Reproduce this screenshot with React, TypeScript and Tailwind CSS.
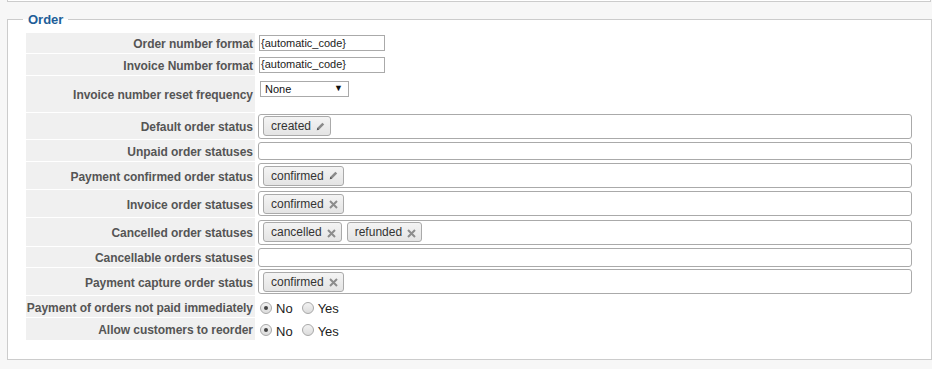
import React from "react";

type Tag = { label: string; icon: "edit" | "remove" };

type Row = {
  label: string;
  h: string;
  kind: "text" | "select" | "tags" | "radio";
  value?: string;
  tags?: Tag[];
  boxH?: string;
};

const rows: Row[] = [
  { label: "Order number format", h: "h-[20px]", kind: "text", value: "{automatic_code}" },
  { label: "Invoice Number format", h: "h-[21px]", kind: "text", value: "{automatic_code}" },
  { label: "Invoice number reset frequency", h: "h-[36px]", kind: "select", value: "None" },
  { label: "Default order status", h: "h-[26px]", kind: "tags", tags: [{ label: "created", icon: "edit" }] },
  { label: "Unpaid order statuses", h: "h-[21px]", kind: "tags", tags: [], boxH: "h-[18px]" },
  { label: "Payment confirmed order status", h: "h-[27px]", kind: "tags", tags: [{ label: "confirmed", icon: "edit" }] },
  { label: "Invoice order statuses", h: "h-[27px]", kind: "tags", tags: [{ label: "confirmed", icon: "remove" }] },
  {
    label: "Cancelled order statuses",
    h: "h-[28px]",
    kind: "tags",
    tags: [
      { label: "cancelled", icon: "remove" },
      { label: "refunded", icon: "remove" },
    ],
  },
  { label: "Cancellable orders statuses", h: "h-[20px]", kind: "tags", tags: [], boxH: "h-[19px]" },
  { label: "Payment capture order status", h: "h-[27px]", kind: "tags", tags: [{ label: "confirmed", icon: "remove" }] },
  { label: "Payment of orders not paid immediately", h: "h-[21px]", kind: "radio" },
  { label: "Allow customers to reorder", h: "h-[22px]", kind: "radio" },
];

function PencilIcon() {
  return (
    <svg width="9" height="9" viewBox="0 0 9 9" className="ml-[5px]">
      <path d="M0.8 8.2 L1.4 5.8 L6.4 0.8 L8.2 2.6 L3.2 7.6 Z" fill="#8a8a8a" />
      <path d="M0.8 8.2 L1.4 5.8 L3.2 7.6 Z" fill="#555" />
    </svg>
  );
}

function RemoveIcon() {
  return (
    <svg width="9" height="9" viewBox="0 0 9 9" className="ml-[5px] mt-[2px]">
      <path d="M1 1 L8 8 M8 1 L1 8" stroke="#8c8c8c" strokeWidth="2" />
    </svg>
  );
}

function TagChip({ tag }: { tag: Tag }) {
  return (
    <span className="flex h-[20px] items-center rounded-[3px] border border-[#aaa] bg-gradient-to-b from-[#f4f4f4] to-[#e4e4e4] pl-[7px] pr-[5px] text-[12px] text-[#333]">
      {tag.label}
      {tag.icon === "edit" ? <PencilIcon /> : <RemoveIcon />}
    </span>
  );
}

function Radio({ checked, label }: { checked: boolean; label: string }) {
  return (
    <span className="flex items-center">
      <span className="flex h-[12px] w-[12px] items-center justify-center rounded-full border border-[#a8a8a8] bg-gradient-to-b from-[#f2f2f2] to-[#dcdcdc]">
        {checked && <span className="h-[4px] w-[4px] rounded-full bg-[#444]" />}
      </span>
      <span className="ml-[4px] mt-[3px] text-[13px] text-[#222]">{label}</span>
    </span>
  );
}

function Value({ row }: { row: Row }) {
  if (row.kind === "text") {
    return (
      <div className="ml-[2px] flex h-[16px] w-[126px] items-center border border-[#aaa] bg-white pl-[1px] text-[11px] text-[#222]">
        {row.value}
      </div>
    );
  }
  if (row.kind === "select") {
    return (
      <div className="ml-[3px] mt-[5px] flex h-[16px] w-[89px] items-center justify-between border border-[#aaa] bg-white pl-[4px] pr-[5px] text-[11px] text-[#111]">
        <span>{row.value}</span>
        <span className="text-[9px]">▼</span>
      </div>
    );
  }
  if (row.kind === "tags") {
    return (
      <div
        className={`ml-[1px] flex ${row.boxH ?? "h-[25px]"} w-[654px] items-center gap-[5px] rounded-[3px] border border-[#aaa] bg-white pl-[4px]`}
      >
        {row.tags?.map((t) => (
          <TagChip key={t.label} tag={t} />
        ))}
      </div>
    );
  }
  return (
    <div className="ml-[3px] mt-[2px] flex items-center gap-[9px]">
      <Radio checked label="No" />
      <Radio checked={false} label="Yes" />
    </div>
  );
}

export default function App() {
  return (
    <div className="h-[369px] w-[932px] overflow-hidden bg-[#f7f7f7] font-['Liberation_Sans',Arial,sans-serif]">
      <div className="ml-[7px] h-[2px] w-[924px] border-x border-b border-[#ccc] bg-white" />

      <fieldset className="ml-[7px] mt-[10px] h-[348px] w-[925px] border border-[#ccc] bg-white p-0">
        <legend className="ml-[15px] px-[5px] text-[13px] font-bold leading-[15px] text-[#215e98]">Order</legend>

        <div className="ml-[18px] mt-[6px] flex flex-col gap-[1px]">
          {rows.map((row) => (
            <div key={row.label} className={`flex ${row.h}`}>
              <div className="flex w-[229px] items-center justify-end whitespace-nowrap bg-[#f0f0f0] pr-[2px] pt-[2px] text-[12px] font-bold tracking-[-0.05px] text-[#555]">
                {row.label}
              </div>
              <div className={`ml-[2px] flex ${row.kind === "select" ? "items-start" : "items-center"}`}>
                <Value row={row} />
              </div>
            </div>
          ))}
        </div>
      </fieldset>
    </div>
  );
}
